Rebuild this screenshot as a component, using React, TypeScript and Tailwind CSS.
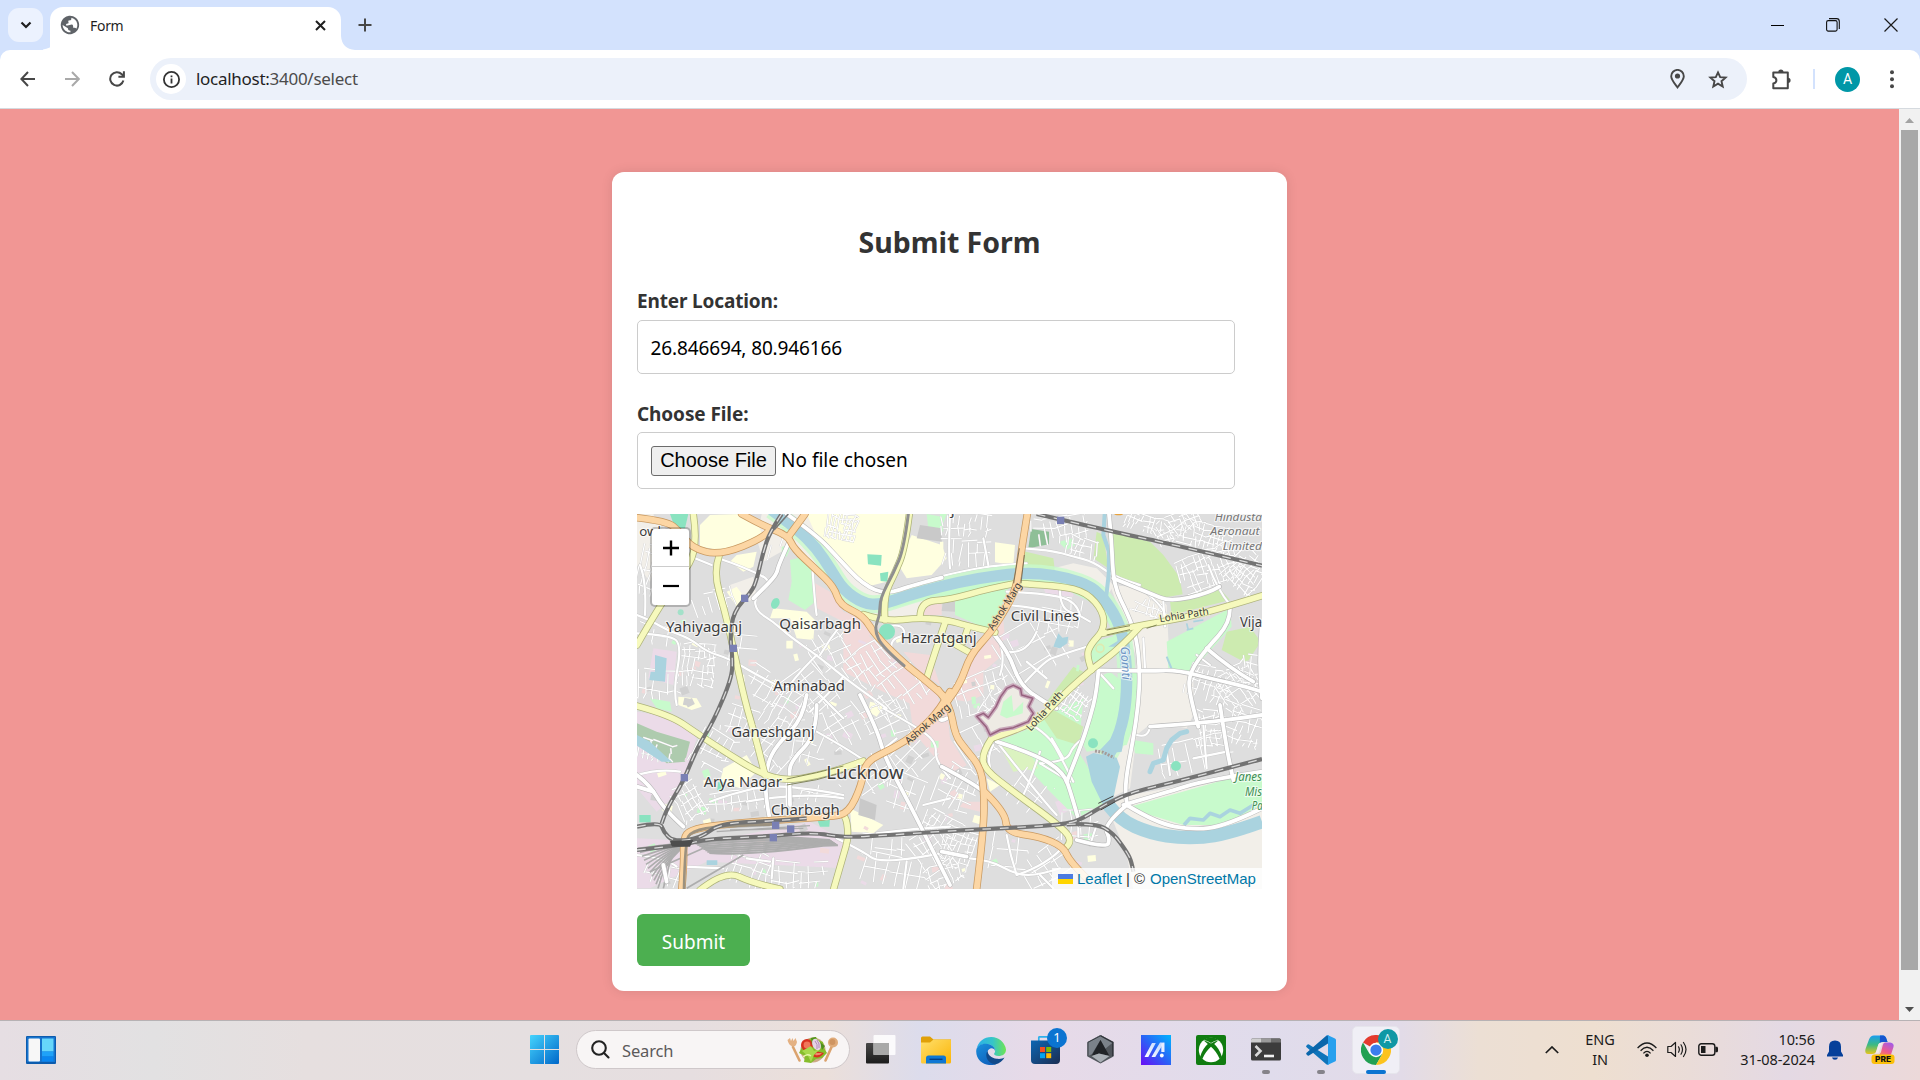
import React from "react";
import { MdPublic } from "react-icons/md";

/* ---------- Map data (three map units per pixel) ---------- */

type Area = { f: string; d: string };

const pts = (s: string) => "M" + s.split(" ").join("L");

// Rounds the corners of a polyline by running quadratic curves through segment midpoints.
const smooth = (s: string) => {
  const p = s.split(" ").map((q) => q.split(",").map(Number));
  if (p.length < 3) return pts(s);
  let d = `M${p[0][0]},${p[0][1]}`;
  for (let i = 1; i < p.length - 1; i++) {
    const [x, y] = p[i];
    const last = i === p.length - 2;
    const ex = last ? p[i + 1][0] : (x + p[i + 1][0]) / 2;
    const ey = last ? p[i + 1][1] : (y + p[i + 1][1]) / 2;
    d += `Q${x},${y} ${ex},${ey}`;
  }
  return d;
};

const beige = "#f2efe9";
const school = "#ffffe0";
const park = "#c8facc";
const grass = "#cdebb0";
const pink = "#f2dada";
const lilac = "#ebdbe8";
const water = "#aad3df";
const mint = "#8ae3c0";

const groundAreas: Area[] = [
  { f: beige, d: "395,27 530,27 640,150 700,240 770,260 900,225 900,340 790,345 700,330 640,290 560,190 490,120 400,170 380,100" },
  { f: beige, d: "21,27 70,27 100,90 60,230 21,180" },
  { f: beige, d: "300,240 370,215 380,280 320,300" },
  { f: beige, d: "1250,195 1330,175 1400,190 1450,240 1430,280 1380,235 1280,210" },
  { f: beige, d: "1440,240 1560,250 1610,300 1620,500 1690,500 1690,630 1670,670 1570,650 1520,690 1500,850 1440,880 1440,740 1500,640 1520,460" },
  { f: beige, d: "1430,900 1500,870 1896,800 1896,1152 1510,1152 1490,1050" },
  { f: beige, d: "1540,500 1670,495 1685,640 1560,665" },
  { f: pink, d: "555,235 600,260 640,320 700,340 725,390 690,400 640,350 560,310" },
  { f: pink, d: "640,370 700,380 740,410 800,470 920,560 930,600 850,600 760,560 640,500 640,450" },
  { f: pink, d: "820,440 900,450 930,540 870,500" },
  { f: pink, d: "870,300 935,290 935,330 880,330" },
  { f: pink, d: "1080,390 1120,345 1125,400 1100,430" },
  { f: pink, d: "1020,440 1080,400 1130,440 1060,500 1060,570 1010,590 950,580 990,520" },
  { f: pink, d: "835,570 950,600 960,700 1010,780 960,810 900,740 850,680" },
  { f: pink, d: "1000,890 1060,890 1050,920 990,905" },
  { f: lilac, d: "70,430 140,440 130,540 55,520" },
  { f: lilac, d: "21,620 150,640 200,700 150,860 80,920 21,850" },
  { f: lilac, d: "21,1000 240,1010 540,950 650,1010 640,1090 440,1080 230,1070 60,1150 21,1150" },
  { f: lilac, d: "1235,240 1330,255 1330,275 1250,270" },
  { f: lilac, d: "1730,365 1760,345 1780,370 1755,395" },
  { f: lilac, d: "1275,890 1320,880 1330,910 1290,930" },
  { f: school, d: "210,60 240,30 335,27 385,60 400,95 270,145 210,125" },
  { f: school, d: "320,150 380,140 370,185 340,200 300,170" },
  { f: school, d: "530,27 830,27 815,130 770,230 710,245 640,180 560,95" },
  { f: school, d: "845,90 935,120 950,160 905,210 830,220 805,180" },
  { f: school, d: "430,310 530,320 555,345 550,405 500,400 480,340 420,340" },
  { f: school, d: "290,260 320,245 345,280 320,305" },
  { f: school, d: "1095,112 1155,120 1150,180 1095,172" },
  { f: school, d: "930,110 940,110 940,175 930,175" },
  { f: school, d: "145,575 200,580 215,605 185,615 145,600" },
  { f: school, d: "280,790 350,750 380,800 330,850 270,830" },
  { f: school, d: "660,910 760,960 730,985 665,980" },
  { f: school, d: "1070,820 1110,840 1080,860" },
  { f: school, d: "720,590 765,600 740,635 715,620" },
  { f: park, d: "480,165 520,155 548,195 555,290 525,315 475,285 485,230" },
  { f: park, d: "975,290 1000,280 1135,250 1085,378 975,330" },
  { f: park, d: "780,290 870,260 935,250 935,265 860,290 790,310" },
  { f: park, d: "930,245 1090,215 1160,220 1330,235 1400,255 1450,300 1490,370 1440,360 1400,300 1300,250 1160,245 930,285" },
  { f: park, d: "455,125 485,120 470,155 455,150" },
  { f: park, d: "1285,110 1330,100 1335,120 1310,135" },
  { f: park, d: "930,27 950,27 930,80" },
  { f: park, d: "890,27 935,35 940,80 895,70" },
  { f: park, d: "1375,470 1390,410 1500,380 1500,410 1400,470" },
  { f: park, d: "1400,520 1440,500 1515,560 1520,640 1490,720 1370,740 1360,720" },
  { f: park, d: "1495,500 1530,500 1510,640 1490,640" },
  { f: park, d: "1610,410 1800,310 1805,365 1715,465 1680,505 1615,490" },
  { f: park, d: "1100,710 1200,670 1290,610 1360,580 1345,740 1370,780 1430,890 1340,940 1250,850 1150,740" },
  { f: park, d: "1500,905 1800,820 1896,800 1896,900 1780,960 1660,960 1560,930" },
  { f: park, d: "1510,705 1570,715 1570,750 1515,745" },
  { f: park, d: "1110,600 1160,580 1170,620 1120,640" },
  { f: park, d: "60,580 120,590 125,620 80,610" },
  { f: "#aecbae", d: "21,655 80,680 180,710 165,770 110,775 21,700" },
  { f: "#dbf3c0", d: "1105,715 1200,745 1225,790 1150,800" },
  { f: grass, d: "1435,80 1560,110 1600,150 1648,215 1658,268 1600,278 1460,225 1440,150" },
  { f: grass, d: "1400,80 1420,90 1435,190 1390,160" },
  { f: grass, d: "1178,138 1270,160 1275,200 1178,180" },
  { f: grass, d: "1620,288 1765,245 1800,285 1625,330" },
  { f: grass, d: "1790,380 1860,365 1892,410 1850,475 1775,435" },
  { f: grass, d: "1250,590 1330,485 1360,500 1260,600" },
  { f: grass, d: "1240,640 1270,615 1360,665 1345,720 1280,700" },
  { f: "#8fbf97", d: "1203,72 1257,80 1257,118 1195,130" },
  { f: mint, d: "120,27 175,27 165,70 135,68" },
  { f: mint, d: "712,148 755,150 753,182 714,178" },
  { f: mint, d: "750,205 775,200 772,230 752,228" },
  { f: mint, d: "560,940 600,940 598,965 570,965" },
  { f: mint, d: "28,930 62,930 62,952 28,952" },
  { f: mint, d: "265,830 280,830 278,860 262,855" },
  { f: "#c9c9c9", d: "690,880 740,900 735,945 685,930" },
  { f: "#c9c9c9", d: "870,60 935,70 935,110 860,100" },
  { f: "#cfcfcf", d: "940,280 975,290 975,320 935,318" },
];

// Neighbourhood street grids: centre x, centre y, width, height, angle, spacing.
const districts: number[][] = [
  [70, 200, 90, 150, 15, 18], [75, 390, 100, 60, 8, 22], [200, 480, 110, 130, 5, 15], [90, 540, 130, 90, 5, 22],
  [250, 290, 120, 60, -20, 24], [400, 540, 130, 90, 30, 30], [635, 65, 90, 80, 12, 11], [600, 430, 120, 110, -30, 26],
  [720, 480, 150, 110, -35, 22], [810, 560, 160, 110, -35, 24], [540, 560, 150, 120, 50, 34], [1010, 60, 150, 70, 3, 17],
  [1000, 145, 160, 80, 6, 24], [1290, 75, 170, 80, -8, 20], [1355, 130, 90, 60, 15, 15], [1560, 60, 150, 50, 14, 12],
  [1720, 100, 170, 90, 14, 13], [1640, 60, 140, 70, -30, 14], [1740, 190, 190, 110, -22, 15], [1850, 200, 110, 120, 40, 13],
  [1560, 310, 110, 50, 20, 16], [1210, 430, 200, 160, -30, 44], [1290, 330, 120, 110, 8, 30], [1060, 560, 170, 110, -20, 26],
  [1110, 610, 100, 90, 35, 24], [1330, 590, 90, 90, 35, 12], [1740, 540, 140, 100, 20, 18], [1830, 550, 120, 130, -35, 15],
  [1830, 660, 130, 120, 15, 18], [1740, 670, 90, 110, -5, 15], [1870, 500, 60, 100, 5, 20], [1700, 750, 220, 100, -12, 42],
  [640, 660, 130, 120, 60, 24], [470, 620, 120, 130, 30, 22], [330, 650, 100, 90, 20, 24], [420, 740, 120, 100, 40, 24],
  [540, 730, 100, 100, 15, 26], [770, 660, 130, 120, 65, 34], [860, 760, 130, 120, 40, 34], [730, 800, 120, 130, 60, 34],
  [250, 740, 110, 120, 30, 24], [300, 890, 230, 60, -6, 24], [560, 860, 140, 60, 10, 24], [180, 890, 80, 110, -30, 18],
  [80, 740, 110, 60, 15, 16], [840, 870, 140, 110, 20, 34], [980, 850, 120, 130, 25, 22], [940, 960, 120, 60, 30, 18],
  [980, 1030, 100, 120, 20, 14], [900, 1030, 100, 110, -35, 20], [760, 1020, 130, 60, 2, 30], [800, 1100, 200, 90, 12, 34],
  [510, 1110, 170, 80, 0, 22], [360, 1090, 130, 110, 20, 20], [100, 1110, 110, 60, 15, 24], [1140, 1040, 110, 120, 10, 38],
  [1250, 1080, 150, 100, -30, 34], [1350, 960, 110, 90, 0, 28], [1040, 720, 100, 110, -30, 32], [1200, 860, 100, 110, 40, 40],
  [940, 1110, 110, 70, -25, 15], [450, 120, 50, 110, 15, 28], [340, 440, 80, 100, 10, 28],
];

let seed = 7;
const rnd = () => {
  seed = (seed * 16807) % 2147483647;
  return seed / 2147483647;
};

const streetPaths = districts.map(([cx, cy, w, h, a, s]) => {
  let d = "";
  for (let x = -w / 2; x <= w / 2; x += s) {
    let y = -h / 2 + rnd() * 14;
    while (y < h / 2) {
      const len = s * (1 + rnd() * 3);
      if (rnd() > 0.24) {
        const j = (rnd() - 0.5) * 8;
        d += `M${(x + j).toFixed(0)},${y.toFixed(0)}L${(x - j).toFixed(0)},${Math.min(h / 2, y + len).toFixed(0)}`;
      }
      y += len;
    }
  }
  for (let y = -h / 2; y <= h / 2; y += s * 1.4) {
    let x = -w / 2 + rnd() * 14;
    while (x < w / 2) {
      const len = s * (1 + rnd() * 3);
      if (rnd() > 0.24) {
        const j = (rnd() - 0.5) * 10;
        d += `M${x.toFixed(0)},${(y + j).toFixed(0)}L${Math.min(w / 2, x + len).toFixed(0)},${(y - j).toFixed(0)}`;
      }
      x += len;
    }
  }
  return { d, t: `translate(${cx} ${cy}) rotate(${a})` };
});

const patchColours = [park, school, pink, lilac, "#d0d0d0"];
const patches = Array.from({ length: 150 }, () => ({
  x: 21 + rnd() * 1380,
  y: 340 + rnd() * 800,
  w: 8 + rnd() * 20,
  h: 8 + rnd() * 16,
  a: rnd() * 60 - 30,
  f: patchColours[Math.floor(rnd() * 5)],
})).filter((p) => !(p.x > 1080 && p.y > 550 && p.y < 950));

const lanes = [
  "21,330 60,345 110,375 180,400 230,440 300,462 380,510 450,545",
  "21,385 120,390 155,420 130,560 140,600",
  "265,160 340,185 400,215",
  "400,215 430,235 372,275 380,320 430,350 480,395 560,450 640,515 700,560 770,610",
  "190,140 230,120 270,150",
  "548,200 556,310 560,330",
  "560,450 500,510 480,540",
  "640,350 600,400 570,450",
  "640,515 600,560 560,600 540,620",
  "30,180 50,230 45,330",
  "195,160 245,180",
  "770,365 810,355 830,390 790,400 780,430 800,450",
  "930,215 1010,195 1110,180 1190,175",
  "960,27 955,150 960,190",
  "1060,100 1075,180",
  "1180,130 1260,135 1330,155 1390,170 1460,220 1530,240",
  "1290,255 1290,310 1350,330 1380,350",
  "1130,260 1250,265 1340,290 1350,330",
  "1130,300 1240,310 1290,330",
  "1100,390 1130,450 1110,510",
  "1160,560 1240,470 1290,450 1370,425",
  "1190,470 1250,520",
  "1220,380 1190,450 1130,440",
  "1600,290 1605,365",
  "1540,400 1545,490",
  "1520,240 1600,300 1605,330",
  "1735,180 1760,250 1800,300",
  "1405,500 1450,550",
  "1700,450 1740,480",
  "1090,720 1060,770 1100,830",
  "1170,640 1250,680 1300,770 1330,830",
  "1230,740 1200,830 1180,870",
  "1230,775 1310,770 1330,720 1360,700",
  "1265,700 1300,760",
  "1100,710 1250,900 1280,930",
  "1320,830 1230,775",
  "1345,960 1345,1000",
  "1400,960 1380,1020",
  "1560,665 1555,700 1520,690",
  "1610,740 1620,810",
  "1720,660 1730,790",
  "1690,760 1790,740",
  "1130,990 1140,1050 1160,1110",
  "1160,1110 1250,1080 1300,1025",
  "1020,1060 1080,1065 1160,1110 1230,1110 1290,1090",
  "1230,1110 1270,1150",
  "560,680 650,730 700,765",
  "760,610 850,660 920,710 915,770 960,820",
  "470,820 470,900",
  "620,1000 700,1040 740,1070 860,1060 960,1040",
  "740,985 850,970 960,965",
  "880,900 960,880",
  "830,1070 820,1150",
  "21,810 90,790 150,800",
  "350,1060 420,1070",
  "160,1085 280,1090",
  "21,1050 110,1060 140,1085",
  "350,890 520,860 640,880",
  "240,890 350,850 480,840 640,870",
  "430,1060 425,1120",
  "690,790 800,700",
  "560,560 640,640",
];

const streets = [
  "470,27 560,90 625,160 700,240 770,268 850,240 935,218",
  "480,105 445,180 440,210 390,260 370,280",
  "1437,27 1445,110 1450,240 1495,330 1520,400 1530,500 1525,600 1510,700 1482,850 1490,890",
  "1450,220 1560,265 1620,290 1735,265 1768,245",
  "1405,496 1560,498 1640,495 1760,525 1850,545 1896,560",
  "1800,310 1800,355 1730,430 1680,500 1675,560 1705,665",
  "1730,430 1800,490 1870,530",
  "1895,360 1885,480 1896,580",
  "1090,385 1135,440 1170,540 1240,590 1280,610",
  "1100,710 1210,745 1300,800 1325,870 1350,960",
  "1310,830 1350,730 1380,640 1400,560 1405,500",
  "1560,665 1700,655 1830,640 1896,630",
  "1770,600 1785,700 1800,780 1810,825",
  "1490,900 1580,955 1690,975 1790,962 1896,910",
  "1480,900 1600,865 1730,825 1896,800",
  "1340,1005 1430,1030 1440,1000 1420,960 1490,900",
  "935,785 1040,840 1062,862",
  "935,1040 1010,1055",
  "530,570 520,640 440,720 410,780 405,870 418,935",
  "560,600 560,690 480,770 478,820 480,900",
  "690,570 740,670 765,760 840,900 900,1020 960,1140",
  "935,600 915,660 950,640",
  "21,810 60,840 100,910 160,965",
  "21,845 70,860",
  "110,1130 100,1080",
];

const yellow = [
  "190,27 205,130 150,220 90,300 21,420",
  "268,150 250,200 285,320 310,430 345,590 375,690 405,810",
  "21,603 120,630 200,685 300,750 390,805 470,828 560,812 640,790 700,768",
  "210,1155 285,1095 370,1135 450,1152",
  "610,1155 640,1050 655,1000 650,940 640,930",
  "838,27 825,130 795,205 760,275 765,345",
  "700,328 765,350 870,338 960,347 1010,362 1095,382",
  "870,338 870,290 960,284 1080,250 1160,235",
  "947,348 915,440 890,520",
  "1015,365 1000,410",
  "935,395 1015,440",
  "1160,235 1290,242 1370,262 1420,320 1422,375 1380,420 1370,455 1385,495",
  "1420,385 1520,362 1660,340 1800,302 1896,272",
  "1530,365 1470,430 1385,492 1310,560 1270,600 1220,655 1085,700",
  "1085,700 1058,740 1060,790 1150,860 1280,955 1330,1005 1310,1025",
];

const orange = [
  "21,38 110,48 150,80 185,128 268,152 410,95 420,72",
  "335,27 390,58 475,92 490,130 560,195 612,245 630,300 700,332 735,390 825,478 880,520 955,585",
  "525,27 475,95",
  "1192,27 1175,130 1162,235 1140,290 1085,380 1020,450 990,540 955,585",
  "960,560 930,615 860,685 790,730 705,770 695,840 655,925 600,935 400,948 260,960 180,975 160,1000 162,1080 155,1155",
  "925,555 960,600 975,690 1005,730 1050,785 1062,850 1062,970 1040,1152",
  "1065,862 1125,920 1130,982 1230,995 1300,1025 1320,1070 1370,1120",
];

const rails = [
  "455,27 420,80 400,140 380,225 365,260 310,320 300,400 308,460 305,520 250,650 200,730 160,830 110,910 95,955",
  "21,965 90,950 100,980 130,1010 210,1000 270,955 430,948 530,940",
  "21,1035 160,1020 230,1002 400,995 550,982 640,998 780,990 1000,975 1160,968 1310,958 1360,940 1430,895 1510,860 1640,830 1896,762",
  "1310,958 1400,955 1450,985 1490,1040 1505,1070 1510,1100",
  "1220,27 1470,85 1600,112 1896,182",
];

const stations = [
  [344, 280], [310, 430], [163, 818], [437, 961], [482, 972], [430, 998], [1292, 46],
];

const river = "425,15 500,70 560,130 600,190 640,255 700,295 750,300 840,270 930,245 1040,220 1160,205 1230,205 1310,218 1385,245 1430,290 1470,360 1485,430 1492,540 1482,640 1455,720 1430,760";

type Label = { t: string; x: number; y: number; w: number; s?: number; r?: number; c?: string; i?: boolean; h?: string };
const labels: Label[] = [
  { t: "Yahiyaganj", x: 108, y: 382, w: 228 },
  { t: "Qaisarbagh", x: 448, y: 373, w: 245 },
  { t: "Hazratganj", x: 812, y: 414, w: 228 },
  { t: "Civil Lines", x: 1142, y: 348, w: 205 },
  { t: "Aminabad", x: 430, y: 559, w: 215 },
  { t: "Ganeshganj", x: 304, y: 697, w: 250 },
  { t: "Arya Nagar", x: 221, y: 845, w: 235 },
  { t: "Lucknow", x: 589, y: 821, w: 232, s: 55 },
  { t: "Charbagh", x: 423, y: 930, w: 206 },
  { t: "Vija", x: 1830, y: 367, w: 66 },
  { t: "owk", x: 28, y: 92, w: 76, s: 38 },
  { t: "j", x: 962, y: 26, w: 12, s: 42 },
  { t: "Ashok Marg", x: 836, y: 720, w: 168, s: 31, r: -41, h: "#fcd6a4" },
  { t: "Ashok Marg", x: 1090, y: 378, w: 162, s: 31, r: -58, h: "#fcd6a4" },
  { t: "Lohia Path", x: 1590, y: 352, w: 149, s: 31, r: -9, h: "#f7fabf" },
  { t: "Lohia Path", x: 1202, y: 680, w: 148, s: 31, r: -48, h: "#f7fabf" },
  { t: "Gomti", x: 1472, y: 425, w: 100, s: 36, r: 87, c: "#6b93c4", i: true },
  { t: "Hindusta", x: 1754, y: 48, w: 142, s: 35, c: "#777", i: true },
  { t: "Aeronaut", x: 1741, y: 91, w: 148, s: 35, c: "#777", i: true },
  { t: "Limited", x: 1778, y: 136, w: 118, s: 35, c: "#777", i: true },
  { t: "Janes", x: 1815, y: 828, w: 81, s: 37, c: "#3f8f55", i: true },
  { t: "Mis", x: 1845, y: 872, w: 51, s: 37, c: "#3f8f55", i: true },
  { t: "Pa", x: 1865, y: 916, w: 33, s: 37, c: "#3f8f55", i: true },
];

function Roads({ list, casing, fill, w, cw }: { list: string[]; casing: string; fill: string; w: number; cw: number }) {
  return (
    <g fill="none" strokeLinecap="round" strokeLinejoin="round">
      {list.map((s, i) => <path key={"c" + i} d={smooth(s)} stroke={casing} strokeWidth={cw} />)}
      {list.map((s, i) => <path key={"f" + i} d={smooth(s)} stroke={fill} strokeWidth={w} />)}
    </g>
  );
}

function CityMap() {
  return (
    <svg viewBox="21 27 1875 1125" className="block h-[375px] w-[625px]">
      <rect x="21" y="27" width="1875" height="1125" fill="#dedede" />
      {groundAreas.map((a, i) => <path key={i} d={pts(a.d) + "Z"} fill={a.f} />)}
      {patches.map((p, i) => (
        <rect key={i} x={p.x} y={p.y} width={p.w} height={p.h} fill={p.f} transform={`rotate(${p.a} ${p.x} ${p.y})`} />
      ))}
      {streetPaths.map((s, i) => (
        <g key={i} transform={s.t} fill="none">
          <path d={s.d} stroke="#cfcfcf" strokeWidth="5.5" />
          <path d={s.d} stroke="#fff" strokeWidth="3.6" />
        </g>
      ))}
      <Roads list={lanes} casing="#cacaca" fill="#fff" w={6.5} cw={9} />

      {/* Water */}
      <g fill="none" stroke={water} strokeLinejoin="round">
        <path d={smooth(river)} stroke={park} strokeWidth="54" opacity=".8" />
        <path d={smooth(river)} strokeWidth="34" />
        <path d="M1424 27L1420 90L1437 140L1436 210L1428 280" strokeWidth="12" />
        <path d={smooth("1435,900 1470,945 1560,985 1660,1000 1780,992 1896,950")} strokeWidth="40" />
        <path d="M1560 800L1570 775L1600 765L1610 730L1625 705L1650 685L1670 680" strokeWidth="15" strokeLinecap="round" />
        <path d="M1662 960L1680 940L1720 945L1740 925L1770 935L1800 915L1830 925L1870 900" strokeWidth="11" />
        <path d="M1610 455L1625 492" strokeWidth="6" />
        <path d="M1670 355L1675 375M1690 350L1720 345M1670 375L1690 370" strokeWidth="5" />
      </g>
      <path d="M1368 755L1390 744L1460 758L1470 785L1450 880L1418 898L1385 830ZM1410 735L1490 650L1475 740L1440 745ZM1270 425L1285 385L1297 398L1315 395L1312 415L1290 430ZM21 690L60 710L125 770L95 770L21 722ZM75 450L110 460L105 530L58 525L62 500L75 500ZM230 1066L262 1066L262 1080L230 1080Z" fill={water} />
      <path d="M1435 425L1500 385L1495 420L1475 425Z" fill={water} />
      <circle cx="1410" cy="430" r="12" fill="none" stroke="#dfeab0" strokeWidth="5" />
      <circle cx="771" cy="380" r="24" fill={mint} />
      <ellipse cx="436" cy="295" rx="12" ry="17" transform="rotate(25 436 295)" fill={mint} />
      <circle cx="1389" cy="715" r="15" fill={mint} />
      <circle cx="1638" cy="783" r="15" fill={mint} />
      <circle cx="152" cy="322" r="9" fill={mint} opacity=".7" />
      <path d="M1395 738L1420 742L1452 758" stroke="#a49b98" strokeWidth="9" strokeDasharray="6 4" fill="none" />

      {/* Rail yard west of the station */}
      <g stroke="#adadad" fill="none" strokeWidth="6">
        {Array.from({ length: 9 }, (_, i) => (
          <path key={i} d={`M${190 + i * 6} ${1012 + i * 4}Q330 ${990 + i * 8} ${500 + i * 10} ${998 + i * 3}L${600 + i * 3} ${1005 + i * 2}`} />
        ))}
        {Array.from({ length: 11 }, (_, i) => (
          <path key={"w" + i} strokeWidth="5" d={`M150 ${1015 + i * 2}Q100 ${1020 + i * 6} ${24 + i * 6} ${1030 + i * 12}`} />
        ))}
        <path d="M130 1030L100 1150M340 1050L170 1150M220 1030L60 1100" strokeWidth="5" />
        <path d="M260 980L540 962M280 968L420 962M300 975L520 970" strokeWidth="4" />
      </g>

      <Roads list={streets} casing="#b9b9b9" fill="#fff" w={11.5} cw={15} />
      <Roads list={yellow} casing="#aeb37a" fill="#f6f9bd" w={17} cw={21.5} />
      <Roads list={orange} casing="#c99a62" fill="#fcd6a4" w={18} cw={22.5} />
      <path d="M1168 130L1151 235M1183 150L1173 235" stroke="#6b604c" strokeWidth="2.5" />
      <path d="M470 822L560 803L640 783M470 840L560 824L640 802M1430 375L1500 362M1430 390L1500 374M1550 370L1580 360" stroke="#6f7344" strokeWidth="2.5" fill="none" />
      <g fill="none" stroke="#8f8f8f" strokeLinecap="round">
        <path d={smooth("835,27 822,130 790,205 750,280 750,330 732,375 760,430 822,482")} strokeWidth="9" />
        <path d={smooth("162,1155 165,1010 185,978 270,962 430,958")} strokeWidth="8" stroke="#9b917f" />
      </g>

      {/* Railways */}
      <g fill="none">
        {rails.map((r, i) => <path key={i} d={smooth(r)} stroke="#737373" strokeWidth="12.5" />)}
        {rails.map((r, i) => <path key={"d" + i} d={smooth(r)} stroke="#dcdcdc" strokeWidth="3.8" strokeDasharray="26 26" />)}
        <path d="M475 27L432 75" stroke="#777" strokeWidth="5" />
        <path d="M1405 895L1450 873M1412 915L1456 890" stroke="#444" strokeWidth="3" />
      </g>
      <path d="M120 1008L190 1005L180 1025L125 1025Z" fill="#4d4d4d" />

      {/* Zoo boundary */}
      <path
        d="M1040 634L1060 625L1075 637L1098 605L1112 575L1130 550L1150 541L1172 552L1175 570L1208 580L1196 605L1210 625L1195 650L1150 668L1110 675L1080 690L1068 665Z"
        fill="#eeebe4"
      />
      <path d="M1110 630L1120 590L1145 570L1150 620L1170 600L1180 590L1178 625L1130 640Z" fill={park} />
      <path
        d="M1040 634L1060 625L1075 637L1098 605L1112 575L1130 550L1150 541L1172 552L1175 570L1208 580L1196 605L1210 625L1195 650L1150 668L1110 675L1080 690L1068 665Z"
        fill="none" stroke="#c9a9bb" strokeWidth="13" strokeLinejoin="round"
      />
      <path
        d="M1040 634L1060 625L1075 637L1098 605L1112 575L1130 550L1150 541L1172 552L1175 570L1208 580L1196 605L1210 625L1195 650L1150 668L1110 675L1080 690L1068 665Z"
        fill="none" stroke="#97627f" strokeWidth="4.5" strokeLinejoin="round"
      />

      {stations.map(([x, y], i) => <rect key={i} x={x - 11} y={y - 11} width="22" height="22" fill="#7a80b4" />)}
      <ellipse cx="1466" cy="25" rx="14" ry="6" fill="#e8a23d" />

      {labels.map((l, i) => (
        <text
          key={i} x={l.x} y={l.y} textLength={l.w} lengthAdjust="spacingAndGlyphs"
          fontFamily='"Noto Sans", sans-serif' fontSize={l.s ?? 45} fontStyle={l.i ? "italic" : "normal"}
          fill={l.c ?? "#3c3c3c"} stroke={l.h ?? "#ffffff"} strokeOpacity=".65" strokeWidth="7" strokeLinejoin="round"
          paintOrder="stroke" transform={l.r ? `rotate(${l.r} ${l.x} ${l.y})` : undefined}
        >
          {l.t}
        </text>
      ))}
    </svg>
  );
}

/* ---------- Browser frame ---------- */

function TabStrip() {
  return (
    <div className="flex h-[50px] items-start bg-[#d3e2fd]">
      <div className="ml-2 mt-2 flex h-[34px] w-[35px] items-center justify-center rounded-[11px] bg-[#ecf2fe]">
        <svg width="12" height="8" viewBox="0 0 12 8" fill="none" stroke="#1f1f1f" strokeWidth="2.2"><path d="M1.5 1.5L6 6L10.5 1.5" /></svg>
      </div>
      <svg className="mt-[36px]" width="14" height="14" viewBox="0 0 14 14"><path d="M14 0V14H-8Q14 14 14 0Z" fill="#fff" /></svg>
      <div className="-ml-[7px] mt-[7px] flex h-[43px] w-[291px] items-center rounded-t-[13px] bg-white pb-[7px] pl-[9px] pr-[13px]">
        <MdPublic className="h-[22px] w-[22px] -rotate-12 text-[#5f6368]" />
        <span className="ml-[9px] flex-1 pt-[1px] font-['Noto_Sans',sans-serif] text-[14px] leading-5 tracking-[-0.3px] text-[#1f1f1f]">Form</span>
        <svg className="mr-[2px]" width="11" height="11" viewBox="0 0 11 11" stroke="#1f1f1f" strokeWidth="2"><path d="M1 1L10 10M10 1L1 10" /></svg>
      </div>
      <svg className="mt-[36px]" width="14" height="14" viewBox="0 0 14 14"><path d="M0 0V14H14Q1 13 0 0Z" fill="#fff" /></svg>
      <svg className="ml-[3px] mt-[18px]" width="14" height="14" viewBox="0 0 14 14" stroke="#474747" strokeWidth="2"><path d="M7 0.5V13.5M0.5 7H13.5" /></svg>
      <div className="ml-auto flex h-[50px] items-center pr-[22px]">
        <svg width="13" height="13" viewBox="0 0 13 13" stroke="#000"><path d="M0 6.5H13" /></svg>
        <svg className="ml-[42px]" width="14" height="14" viewBox="0 0 14 14" fill="none" stroke="#111" strokeWidth="1.1">
          <rect x="0.6" y="2.6" width="10.5" height="10.5" rx="1.6" /><path d="M3 0.6H10.6Q13.3 0.6 13.3 3.4V11" />
        </svg>
        <svg className="ml-[44px]" width="14" height="14" viewBox="0 0 14 14" stroke="#1a1a1a" strokeWidth="1.2"><path d="M0.5 0.5L13.5 13.5M13.5 0.5L0.5 13.5" /></svg>
      </div>
    </div>
  );
}

function Toolbar() {
  return (
    <div className="bg-[#d3e2fd]">
      <div className="flex h-[59px] items-center rounded-t-[10px] border-b border-[#d5dadf] bg-white">
        <svg className="ml-5" width="16" height="16" viewBox="0 0 16 16" fill="none" stroke="#474747" strokeWidth="2"><path d="M15 8H1.8M8 1L1.4 8L8 15" /></svg>
        <svg className="ml-[28px]" width="16" height="16" viewBox="0 0 16 16" fill="none" stroke="#a9a9a9" strokeWidth="2"><path d="M1 8H14.6M8 1L14.800 8L8 15" /></svg>
        <svg className="ml-[29px]" width="16" height="16" viewBox="0 0 16 16" fill="none" stroke="#474747" strokeWidth="2">
          <path d="M14.4 9.6A6.7 6.7 0 1 1 12.8 3.3L14.6 5.2" /><path d="M14.9 0.3V5.8H9.4" />
        </svg>
        <div className="ml-[25px] flex h-[42px] w-[1597px] items-center rounded-full bg-[#ecf1fa] pl-[6px] pr-[19px]">
          <div className="flex h-[30px] w-[30px] items-center justify-center rounded-full bg-white">
            <svg width="17" height="17" viewBox="0 0 17 17" fill="none" stroke="#333" strokeWidth="1.8"><circle cx="8.5" cy="8.5" r="7.6" /><path d="M8.5 7.5V12.4M8.5 4.4V6.2" /></svg>
          </div>
          <span className="ml-[10px] font-['Noto_Sans',sans-serif] text-[17px] tracking-[-0.28px] text-[#1f1f1f]">
            localhost:<span className="text-[#4b4b4b]">3400/select</span>
          </span>
          <svg className="ml-auto" width="15" height="20" viewBox="0 0 15 20" fill="none" stroke="#474747" strokeWidth="1.9">
            <path d="M7.5 18.4C4 13.8 1.2 10.6 1.2 7.2A6.3 6.3 0 0 1 13.8 7.2C13.8 10.6 11 13.8 7.5 18.4Z" /><circle cx="7.5" cy="7" r="2.6" fill="#474747" stroke="none" />
          </svg>
          <svg className="ml-[23px]" width="20" height="19" viewBox="0 0 20 19" fill="none" stroke="#474747" strokeWidth="1.9">
            <path d="M10 2.4L12.2 7.1L17.6 7.6L13.5 11.2L14.7 16.6L10 13.7L5.3 16.6L6.5 11.2L2.4 7.6L7.8 7.1Z" />
          </svg>
        </div>
        <svg className="ml-[24px]" width="22" height="21" viewBox="0 0 22 21" fill="none" stroke="#474747" strokeWidth="2">
          <path d="M2.3 3.4H16.8V19.2H2.3V14.6Q5.4 14 5.4 11.3Q5.4 8.6 2.3 8Z" strokeLinejoin="round" />
          <path d="M7.3 3A2.600 2.600 0 0 1 12.500 3ZM17 8.700A2.600 2.600 0 0 1 17 13.900Z" fill="#474747" stroke="none" />
        </svg>
        <div className="ml-5 h-5 w-[2px] bg-[#d3e2fd]" />
        <div className="ml-5 flex h-[25px] w-[25px] items-center justify-center rounded-full bg-[#0097a7] font-[Roboto,sans-serif] text-[14px] text-white">A</div>
        <svg className="ml-[30px]" width="4" height="19" viewBox="0 0 4 19" fill="#474747"><circle cx="2" cy="2.2" r="2" /><circle cx="2" cy="9.2" r="2" /><circle cx="2" cy="16.2" r="2" /></svg>
      </div>
    </div>
  );
}

/* ---------- Page ---------- */

function FormCard() {
  return (
    <div className="mx-auto mt-[63px] h-[819px] w-[675px] rounded-[12px] bg-white px-[25px] py-[25px] font-['Noto_Sans',sans-serif] text-[#333] shadow-[0_0_12px_rgba(0,0,0,0.1)]">
      <h2 className="mt-[25px] h-10 text-center text-[28.5px] font-bold leading-10 tracking-[-0.05px]">Submit Form</h2>
      <div className="mt-[26px] h-[27px] whitespace-nowrap text-[19px] font-bold leading-[27px] tracking-[-0.15px]">Enter Location:</div>
      <div className="mt-[5px] flex h-[54px] w-[598px] items-center rounded-[5px] border border-[#ccc] px-[12.5px] pt-[2px] text-[19px] tracking-[-0.13px] text-black">
        26.846694, 80.946166
      </div>
      <div className="mt-[27px] h-[27px] whitespace-nowrap text-[19px] font-bold leading-[27px] tracking-[-0.1px]">Choose File:</div>
      <div className="mt-[4px] flex h-[57px] w-[598px] items-center rounded-[5px] border border-[#ccc] px-[13px] text-black">
        <div className="flex h-[30px] w-[125px] items-center justify-center rounded-[3px] border border-[#6b6b6b] bg-[#efefef] pb-[2px] font-['Liberation_Sans',sans-serif] text-[20px]">
          Choose File
        </div>
        <span className="ml-[5px] text-[19px]">No file chosen</span>
      </div>
      <div className="relative mt-[25px] h-[375px] w-[625px] overflow-hidden bg-[#ddd]">
        <CityMap />
        <div className="absolute left-[13px] top-[13px] flex w-[41px] flex-col rounded-[5px] border-2 border-black/20 bg-white bg-clip-padding">
          <div className="flex h-[38px] items-center justify-center border-b border-[#ccc]">
            <svg width="16" height="16" viewBox="0 0 16 16" stroke="#000" strokeWidth="2.4"><path d="M8 0.5V15.5M0 8H16" /></svg>
          </div>
          <div className="flex h-[38px] items-center justify-center">
            <svg width="16" height="16" viewBox="0 0 16 16" stroke="#000" strokeWidth="2.2"><path d="M0 8H16" /></svg>
          </div>
        </div>
        <div className="absolute bottom-0 right-0 flex h-[21px] w-[210px] items-center whitespace-nowrap bg-white/80 pl-[6px] font-['Liberation_Sans',sans-serif] text-[15px] leading-[21px] text-[#333]">
          <svg width="15" height="10" viewBox="0 0 15 10"><path d="M0 0H15V5H0Z" fill="#4c7be1" /><path d="M0 5H15V10H0Z" fill="#ffd500" /></svg>
          <span className="ml-1 text-[#0078a8]">Leaflet</span>
          <span className="mx-1">|</span>©
          <span className="ml-[5px] text-[#0078a8]">OpenStreetMap</span>
        </div>
      </div>
      <button className="mt-[25px] flex h-[52px] w-[113px] items-center justify-center rounded-[6px] bg-[#4caf50] pt-[5px] text-[19px] text-white">Submit</button>
    </div>
  );
}

function Scrollbar() {
  return (
    <div className="flex w-[21px] flex-col items-center bg-[#f1f1f1]">
      <svg className="mt-[9px]" width="9" height="5" viewBox="0 0 9 5"><path d="M0 5L4.5 0L9 5Z" fill="#a3a3a3" /></svg>
      <div className="mt-[7px] h-[840px] w-[17px] bg-[#a8a8a8]" />
      <svg className="mt-[37px]" width="9" height="5" viewBox="0 0 9 5"><path d="M0 0L4.5 5L9 0Z" fill="#505050" /></svg>
    </div>
  );
}

/* ---------- Taskbar icons ---------- */

function Cell({ children, dot }: { children: React.ReactNode; dot?: boolean }) {
  return (
    <div className="relative flex h-[59px] w-[55px] items-center justify-center">
      {children}
      {dot && <div className="absolute bottom-[5px] h-1 w-2 rounded-full bg-[#85838a]" />}
    </div>
  );
}

const WindowsLogo = () => (
  <svg width="29" height="29" viewBox="0 0 29 29">
    <defs><linearGradient id="win" x1="0" y1="0" x2="1" y2="1"><stop offset="0" stopColor="#45d4fd" /><stop offset="1" stopColor="#0067c9" /></linearGradient></defs>
    <path d="M1 0H14V14H0V1Q0 0 1 0ZM15 0H28Q29 0 29 1V14H15ZM0 15H14V29H1Q0 29 0 28ZM15 15H29V28Q29 29 28 29H15Z" fill="url(#win)" />
  </svg>
);

const Salad = () => (
  <svg width="52" height="28" viewBox="0 0 52 28">
    <g stroke="#dba36e" strokeLinecap="round"><path d="M6 11L12.5 24.5" strokeWidth="2.6" /><path d="M45 10L38.5 24.5" strokeWidth="2.6" /></g>
    <path d="M0.5 4L3 2L4 5L5.5 2L6.5 5L8.5 2L10 6Q9 11 5.5 10.5Q1.5 9 0.5 4Z" fill="#e4b183" />
    <ellipse cx="46" cy="6.5" rx="5" ry="5" fill="#e0ac7b" /><ellipse cx="45.4" cy="6" rx="3" ry="3" fill="#cf9562" />
    <circle cx="26" cy="14" r="12.5" fill="#cda987" />
    <path d="M12 17L15 11L18 7L24 2L29 1L31 4L36 6L37 12L40 17L35 22L29 23L24 27L17 26L18 20Z" fill="#86bd2c" />
    <circle cx="20" cy="9" r="6" fill="#d8301f" /><circle cx="20" cy="9" r="3.4" fill="#f0775a" />
    <path d="M25 20Q32 24 37 17L28 15Z" fill="#d8301f" /><path d="M28 19Q33 20 35 17L29 17Z" fill="#f0896c" />
    <path d="M15 15L24 10L27 15L33 13L27 19L24 26L21 20Z" fill="#a9d94c" />
    <path d="M24 2L29 1L28 7L25 9ZM33 6L38 10L35 14Z" fill="#4f9020" />
    <ellipse cx="29.5" cy="8.5" rx="4" ry="6" transform="rotate(-25 29.5 8.5)" fill="#e6d3e4" /><path d="M28 5Q31 8 30 13M30 4Q33 8 32 12" stroke="#b388b8" fill="none" />
    <path d="M16 21Q20 17 24 20" stroke="#e6f7a8" strokeWidth="1.4" fill="none" />
  </svg>
);

const TaskView = () => (
  <svg width="30" height="29" viewBox="0 0 30 29">
    <defs><linearGradient id="tv" x1="0" y1="0" x2="0" y2="1"><stop offset="0" stopColor="#474747" /><stop offset="1" stopColor="#1c1c1c" /></linearGradient></defs>
    <rect x="0" y="8" width="23" height="20.5" rx="1" fill="url(#tv)" />
    <rect x="7.5" y="0" width="22" height="20" rx="1" fill="#fff" opacity=".85" />
    <rect x="7.5" y="8" width="15.5" height="12" fill="#a9a9a9" />
  </svg>
);

const Explorer = () => (
  <svg width="30" height="28" viewBox="0 0 30 28">
    <defs><linearGradient id="fx" x1="0" y1="0" x2="1" y2="1"><stop offset="0" stopColor="#ffdf6b" /><stop offset="1" stopColor="#fbb508" /></linearGradient></defs>
    <path d="M0 2Q0 0.5 1.5 0.5H9L12.5 3.5H30V12H0Z" fill="#e0a008" />
    <path d="M0 6.5H9L12.5 3.5H29Q30 3.5 30 4.5V26Q30 27.5 28.5 27.5H1.5Q0 27.5 0 26Z" fill="url(#fx)" />
    <path d="M5 27.5V22Q5 19.5 7.5 19.5H22.5Q25 19.5 25 22V27.5Z" fill="#0f78d4" />
    <path d="M8.5 23.3H21.5" stroke="#053f86" strokeWidth="1.4" />
  </svg>
);

const Edge = () => (
  <svg width="30" height="30" viewBox="0 0 30 30">
    <defs>
      <linearGradient id="e1" x1="0" y1="0.5" x2="1" y2="0.5"><stop offset="0" stopColor="#2bb0ea" /><stop offset=".55" stopColor="#36c5c8" /><stop offset="1" stopColor="#6ee552" /></linearGradient>
      <linearGradient id="e2" x1="0" y1="0" x2="0.6" y2="1"><stop offset="0" stopColor="#1a90dc" /><stop offset="1" stopColor="#0f62bd" /></linearGradient>
    </defs>
    <path d="M0.5 14A15 15 0 0 1 30 14.5C30 19 26.5 21 22.5 21C19.5 21 18 19.8 18 18.8C18.5 18 19.5 17 19 14.5C18 11 14 9 10 9C5 9 1.5 11.5 0.5 14Z" fill="url(#e1)" />
    <path d="M0.3 14.8C1.5 10.5 6 8.5 10 8.8C15 9 19.5 12 19 16C18.5 12.5 12.5 12 11.5 17C10.5 23.5 16 29 20 29.2C11 32.5 -1 26.5 0.3 14.8Z" fill="url(#e2)" />
    <path d="M11.5 16C8 21.5 12.5 28.5 19 29.5C23.5 28.5 27 25.5 28.5 22.5C27 23.5 24 24.3 21 23.8C15 23 12 20 11.5 16Z" fill="#114a8b" />
  </svg>
);

const Store = () => (
  <svg width="29" height="28" viewBox="0 0 29 28">
    <defs><linearGradient id="st" x1="0" y1="0" x2="1" y2="1"><stop offset="0" stopColor="#0d66b3" /><stop offset="1" stopColor="#1b2d52" /></linearGradient></defs>
    <path d="M7.8 5V1.5Q7.8 0.8 8.6 0.8H20.5Q21.2 0.8 21.2 1.5V5" fill="none" stroke="#2fb0ec" strokeWidth="1.7" />
    <path d="M0 4.5H29V24Q29 28 25 28H4Q0 28 0 24Z" fill="url(#st)" />
    <path d="M9 11H14V16H9Z" fill="#f25022" /><path d="M15.2 11H20.2V16H15.2Z" fill="#7fba00" /><path d="M9 17.2H14V22.2H9Z" fill="#00a4ef" /><path d="M15.2 17.2H20.2V22.2H15.2Z" fill="#ffb900" />
  </svg>
);

const ArmouryCrate = () => (
  <svg width="27" height="29" viewBox="0 0 27 29">
    <path d="M13.5 0L26.5 7V21.5L13.5 28.5L0.5 21.5V7Z" fill="#50555b" />
    <path d="M13.5 0L26.5 7L18 14L13.5 5L5 19L0.5 21.5V7Z" fill="#7b828a" />
    <path d="M13.5 5L22.5 21L12 18.5L4.5 21Z" fill="#202327" />
    <path d="M12 18.5L22.5 21L13.5 27.5L4.5 21Z" fill="#a8aeb4" />
    <path d="M13.5 0.8L25.8 7.4V21" fill="none" stroke="#2e3237" strokeWidth="1.3" /><path d="M1 21V7.4L13.5 0.8" fill="none" stroke="#3a3e43" />
  </svg>
);

const MyAsus = () => (
  <svg width="30" height="30" viewBox="0 0 30 30">
    <defs>
      <linearGradient id="ma" x1="0" y1="1" x2="1" y2="0"><stop offset="0" stopColor="#6a0cf5" /><stop offset=".5" stopColor="#2a63f6" /><stop offset="1" stopColor="#00b4ff" /></linearGradient>
      <linearGradient id="mb" x1="0" y1="1" x2="1" y2="0"><stop offset="0" stopColor="#fff" /><stop offset="1" stopColor="#bcd3ff" /></linearGradient>
    </defs>
    <rect width="30" height="30" fill="url(#ma)" />
    <path d="M3.5 22L11 8H14.8L7.3 22ZM10.5 22L19 7.5H23L14.3 22Z" fill="url(#mb)" /><path d="M20.3 8.5L23.5 7.5V17H20.3Z" fill="#e6eeff" /><circle cx="20.8" cy="20.5" r="1.9" fill="#fff" />
  </svg>
);

const Xbox = () => (
  <svg width="30" height="30" viewBox="0 0 30 30">
    <rect width="30" height="30" rx="2" fill="#107c10" /><circle cx="15" cy="15" r="12.2" fill="#fff" />
    <path d="M7 5.5Q10 4.5 15 8Q20 4.5 23 5.5Q20 2.5 15 2.5Q10 2.5 7 5.5Z" fill="#107c10" />
    <path d="M15 11.8Q9.5 16.5 6.3 24L4.2 21.8Q6.500 13.5 11.8 9L8 5.8Q10.500 5.500 15 8.600Q19.500 5.500 22 5.8L18.2 9Q23.500 13.5 25.800 21.8L23.7 24Q20.5 16.500 15 11.8Z" fill="#107c10" />
  </svg>
);

const Terminal = () => (
  <svg width="30" height="23" viewBox="0 0 30 23">
    <rect y="0.5" width="30" height="22" rx="1.5" fill="#3c3c3c" /><path d="M1.5 0.5H10V4.5H0V2Q0 0.5 1.5 0.5Z" fill="#cfcfcf" /><path d="M10 0.5H20V4.5H10Z" fill="#9a9a9a" /><path d="M20 0.5H28.5Q30 0.5 30 2V4.5H20Z" fill="#6d6d6d" />
    <path d="M4.5 8L9.5 13L4.5 18" fill="none" stroke="#d9d9d9" strokeWidth="2.6" /><path d="M13 18H23" stroke="#f2f2f2" strokeWidth="2.6" />
  </svg>
);

const VsCode = () => (
  <svg width="30" height="30" viewBox="0 0 30 30">
    <path d="M22 21.5L3 9.5Q2 9 1.2 9.8L0.4 10.7Q-0.2 11.5 0.6 12.3L20 29Q21 30 22.5 29.7Z" fill="#0f74ba" />
    <path d="M22 8.5L3 20.5Q2 21 1.2 20.2L0.4 19.3Q-0.2 18.5 0.6 17.7L20 1Q21 0 22.5 0.3Z" fill="#0a66ab" />
    <path d="M22 0.2L29 3.5Q30 4 30 5V25Q30 26 29 26.5L22 29.8Q21 30.2 20 29.3Q22 30 22 28V2Q22 0 20 0.7Q21 -0.2 22 0.2Z" fill="#27a0ee" />
  </svg>
);

const Chrome = () => (
  <svg width="30" height="30" viewBox="0 0 48 48">
    <path d="M24 24L3.2 12A24 24 0 0 1 44.8 12H24Z" fill="#e33b2e" /><path d="M24 24L34.4 30L24 48A24 24 0 0 1 3.2 12L13.6 30Z" fill="#22a052" />
    <path d="M24 12H44.8A24 24 0 0 1 24 48L34.4 30Z" fill="#fcc31e" /><circle cx="24" cy="24" r="11.5" fill="#fff" /><circle cx="24" cy="24" r="9" fill="#3b7ded" />
  </svg>
);

const Copilot = () => (
  <svg width="30" height="30" viewBox="0 0 30 30">
    <defs>
      <linearGradient id="c1" x1="0" y1="0" x2="0" y2="1"><stop offset="0" stopColor="#1a9df0" /><stop offset=".5" stopColor="#3cba82" /><stop offset="1" stopColor="#e6c51c" /></linearGradient>
      <linearGradient id="c2" x1="0.8" y1="0" x2="0.2" y2="1"><stop offset="0" stopColor="#a25be8" /><stop offset=".6" stopColor="#ef5a8e" /><stop offset="1" stopColor="#f98b51" /></linearGradient>
    </defs>
    <path d="M9 0.5H18Q20.5 0.5 21.5 4L22.5 7H18Q14 7 13 11L11.5 16Q10.5 19 7 19H3Q-0.5 19 0.5 14L4 4.5Q5.5 0.5 9 0.5Z" fill="url(#c1)" />
    <path d="M15 0.5H18Q20.5 0.5 21.5 4L22.5 7H18Q16 7 14.8 8.5Z" fill="#1555cf" />
    <path d="M20 7.5H25Q29.5 8 28.5 12L26 19.5Q25.5 21 23 21H12Q15 20 16 17L17.8 10Q18.5 7.5 20 7.5Z" fill="url(#c2)" />
    <path d="M13.5 9Q15 7 18 7.3Q16.5 9 15.5 12.5L13.5 18L10.5 18.5Z" fill="#f3e9ee" />
    <rect x="6.5" y="19.5" width="23" height="9.5" rx="3" fill="#fbbf09" />
    <text x="18" y="27.3" textAnchor="middle" textLength="16" lengthAdjust="spacingAndGlyphs" fontFamily="Inter, sans-serif" fontWeight="800" fontSize="8" fill="#111">PRE</text>
  </svg>
);

function Taskbar() {
  return (
    <div className="flex h-[60px] items-center border-t border-[#b7b2b4] bg-[linear-gradient(90deg,#e6dee3_0%,#e2e1e2_8%,#e6dfdf_16%,#e5dfe0_28%,#e6dee0_36%,#ebdfda_43%,#dcdcec_48%,#e7dae8_54%,#e0dcec_66%,#e2dbe8_73%,#ecdfd4_77%,#eedfd0_83%,#eadcd8_88%,#e4d9e4_93%,#ecd9d9_100%)] pb-[2px] font-['Noto_Sans',sans-serif] text-[#1b1b1b]">
      <div className="flex w-[517px] pl-[26px]">
        <svg width="30" height="28" viewBox="0 0 30 28">
          <rect width="30" height="28" rx="1" fill="#0c5cae" /><rect x="1" y="1" width="28" height="25" fill="#1673cd" />
          <rect x="2.5" y="2.5" width="11.5" height="23" rx="1" fill="#f7f7f7" /><rect x="16" y="2.5" width="11.500" height="13" fill="#66d7fb" />
          <rect x="16" y="15.5" width="11.500" height="5" fill="#1fa2f8" /><rect x="16" y="20.500" width="11.500" height="5" fill="#0a86f0" />
        </svg>
      </div>
      <Cell><WindowsLogo /></Cell>
      <div className="ml-[4px] mr-[3px] flex h-[39px] w-[274px] items-center rounded-full border border-[#cfc8ca] bg-[#f8f5f5] pl-[14px] pr-[10px]">
        <svg width="19" height="19" viewBox="0 0 19 19" fill="none" stroke="#222" strokeWidth="2.1"><circle cx="8" cy="8" r="6.8" /><path d="M13 13L17.5 17.5" strokeLinecap="round" /></svg>
        <span className="ml-[12px] flex-1 pt-[2px] text-[16.5px] leading-6 tracking-[-0.15px] text-[#5c5a5a]">Search</span>
        <Salad />
      </div>
      <Cell><TaskView /></Cell>
      <Cell><Explorer /></Cell>
      <Cell><Edge /></Cell>
      <Cell>
        <Store />
        <div className="absolute left-[29px] top-[8px] flex h-5 w-5 items-center justify-center rounded-full bg-[#0b74d1] text-[13px] text-white">1</div>
      </Cell>
      <Cell><ArmouryCrate /></Cell>
      <Cell><MyAsus /></Cell>
      <Cell><Xbox /></Cell>
      <Cell dot><Terminal /></Cell>
      <Cell dot><VsCode /></Cell>
      <Cell>
        <div className="relative flex h-[48px] w-[48px] items-center justify-center rounded-[5px] border border-[#e6e5ec] bg-[#f0eff6]">
          <Chrome />
          <div className="absolute left-[25px] top-[2px] flex h-5 w-5 items-center justify-center rounded-full bg-[#0f98a5] font-[Roboto,sans-serif] text-[12px] text-[#d5f0f2]">A</div>
          <div className="absolute bottom-[-1px] h-1 w-5 rounded-full bg-[#0b74d1]" />
        </div>
      </Cell>
      <div className="ml-auto flex items-center pr-[25px]">
        <svg width="14" height="8" viewBox="0 0 14 8" fill="none" stroke="#1b1b1b" strokeWidth="1.7"><path d="M0.8 7L7 1L13.2 7" /></svg>
        <div className="ml-[22px] w-[38px] text-center text-[14.5px] leading-[19.5px] tracking-[-0.1px]">ENG<br />IN</div>
        <svg className="ml-[18px]" width="20" height="16" viewBox="0 0 20 16" fill="none" stroke="#1b1b1b" strokeWidth="1.3">
          <path d="M0.6 6Q10 -4 19.4 6M3.6 8.7Q10 1.8 16.4 8.7M6.4 11.4Q10 7.5 13.6 11.4" /><circle cx="10" cy="13.3" r="1.8" fill="#1b1b1b" stroke="none" />
        </svg>
        <svg className="ml-[10px]" width="21" height="17" viewBox="0 0 21 17" fill="none" stroke="#1b1b1b" strokeWidth="1.2" strokeLinejoin="round">
          <path d="M0.8 5.5H4L8.5 1.5V15.5L4 11.5H0.8Z" /><path d="M11.5 5.8Q13.2 8.5 11.5 11.2M14 3.8Q17 8.5 14 13.2M16.5 1.5Q21.5 8.5 16.5 15.5" strokeLinecap="round" />
        </svg>
        <svg className="ml-[10px]" width="20" height="13" viewBox="0 0 20 13" fill="none" stroke="#1b1b1b" strokeWidth="1.4">
          <rect x="0.8" y="0.8" width="16" height="11.4" rx="2.5" /><rect x="3" y="3" width="4.5" height="7" fill="#1b1b1b" stroke="none" /><path d="M18 4.5H19Q20 6.5 19 8.5H18Z" fill="#1b1b1b" />
        </svg>
        <div className="ml-[17px] w-[80px] whitespace-nowrap text-right text-[14.5px] leading-[19.5px] tracking-[-0.1px]">10:56<br />31-08-2024</div>
        <svg className="ml-[12px]" width="16" height="20" viewBox="0 0 16 20"><path d="M8 0.5Q14 0.5 14 6.8V11.5L16 15V16.5H0V15L2 11.5V6.8Q2 0.5 8 0.5ZM5 17.5H11Q10.5 19.7 8 19.7Q5.500 19.7 5 17.5Z" fill="#06409a" /></svg>
        <div className="ml-[22px]"><Copilot /></div>
      </div>
    </div>
  );
}

export default function App() {
  return (
    <div className="flex h-[1080px] w-[1920px] flex-col overflow-hidden">
      <TabStrip />
      <Toolbar />
      <div className="flex h-[911px]">
        <div className="flex-1 bg-[#f19694]"><FormCard /></div>
        <Scrollbar />
      </div>
      <Taskbar />
    </div>
  );
}
